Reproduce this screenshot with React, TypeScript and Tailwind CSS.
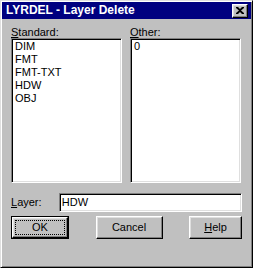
const standardLayers = ['DIM', 'FMT', 'FMT-TXT', 'HDW', 'OBJ'];
const otherLayers = ['0'];

const raised =
  'bg-[#c0c0c0] border border-t-white border-l-white border-r-black border-b-black shadow-[inset_-1px_-1px_#808080,inset_1px_1px_#dfdfdf]';
const sunken =
  'bg-white border border-t-[#808080] border-l-[#808080] border-r-white border-b-white shadow-[inset_1px_1px_#000,inset_-1px_-1px_#dfdfdf]';

function ListBox({ label, hotkey, items }: { label: string; hotkey: string; items: string[] }) {
  return (
    <div className="flex flex-col w-[111px]">
      <div className="h-[11px] leading-[11px] whitespace-nowrap">
        <span className="underline underline-offset-[1px]">{hotkey}</span>
        {label}
      </div>
      <div className={`${sunken} h-[145px] px-[3px] pt-[1px]`}>
        {items.map((item) => (
          <div key={item} className="leading-[13px] h-[13px]">
            {item}
          </div>
        ))}
      </div>
    </div>
  );
}

export default function App() {
  return (
    <div className="w-[253px] h-[268px] bg-[#c0c0c0] border border-t-[#dfdfdf] border-l-[#dfdfdf] border-r-black border-b-black shadow-[inset_1px_1px_#fff,inset_-1px_-1px_#808080] p-[1px] flex flex-col font-['Liberation_Sans',Arial,sans-serif] text-[11px] text-black">
      {/* Title bar */}
      <div className="h-[17px] bg-[#000080] flex items-center justify-between pl-[4px] pr-[3px]">
        <span className="text-white font-bold text-[12px] leading-[17px] whitespace-nowrap">
          LYRDEL - Layer Delete
        </span>
        <div className={`${raised} w-[16px] h-[14px] flex items-center justify-center`}>
          <svg width="8" height="7" viewBox="0 0 8 7">
            <path d="M0 0h2l2 2 2-2h2v1L5 3.5 8 6v1H6L4 5 2 7H0V6l3-2.5L0 1z" fill="#000" />
          </svg>
        </div>
      </div>

      {/* Body */}
      <div className="flex flex-col px-[9px] pt-[8px]">
        <div className="flex gap-[8px]">
          <ListBox hotkey="S" label="tandard:" items={standardLayers} />
          <ListBox hotkey="O" label="ther:" items={otherLayers} />
        </div>

        <div className="flex items-center mt-[10px]">
          <div className="w-[48px] leading-[13px]">
            <span className="underline underline-offset-[1px]">L</span>ayer:
          </div>
          <div className={`${sunken} w-[184px] h-[19px] flex items-center px-[2px] leading-[13px]`}>
            HDW
          </div>
        </div>

        <div className="flex justify-between mt-[4px]">
          <div className="w-[58px] h-[23px] border border-black">
            <div className={`${raised} w-full h-full p-[2px]`}>
              <div className="w-full h-full border border-dotted border-black flex items-center justify-center leading-[13px]">
                OK
              </div>
            </div>
          </div>
          <div className={`${raised} w-[67px] h-[23px] flex items-center justify-center leading-[13px]`}>
            Cancel
          </div>
          <div className={`${raised} w-[53px] h-[23px] flex items-center justify-center leading-[13px]`}>
            <span className="underline underline-offset-[1px]">H</span>elp
          </div>
        </div>
      </div>
    </div>
  );
}
